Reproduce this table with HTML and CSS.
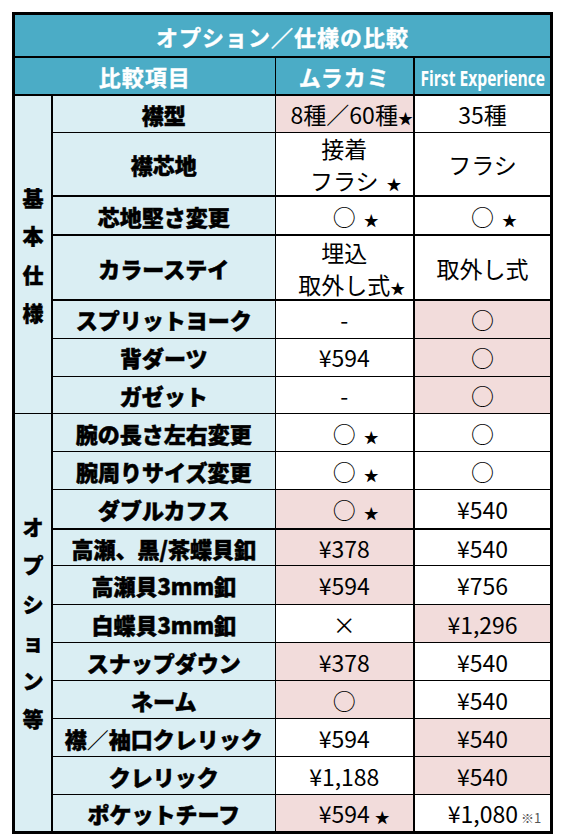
FILE: index.html
```html
<!DOCTYPE html>
<html lang="ja">
<head>
<meta charset="utf-8">
<title>オプション／仕様の比較</title>
<link rel="stylesheet" href="styles.css">
</head>
<body>
<div class="sheet">
<table class="cmp">
<colgroup><col class="c-grp"><col class="c-lbl"><col class="c-mk"><col class="c-fe"></colgroup>
<thead>
<tr class="r-title"><th colspan="4" class="title">オプション／仕様の比較</th></tr>
<tr class="r-head"><th colspan="2" class="head">比較項目</th><th class="head">ムラカミ</th><th class="head fe"><span class="narrow">First Experience</span></th></tr>
</thead>
<tbody>
<tr class="h37">
  <td rowspan="7" class="grp"><div class="vt"><span>基</span><span>本</span><span>仕</span><span>様</span></div></td>
  <th class="lbl">襟型</th><td class="pk">8種／60種<span class="star">★</span></td><td class="fe">35種</td></tr>
<tr class="h63 tb">
  <th class="lbl">襟芯地</th><td><div class="two">接着<br>フラシ<span class="star sp">★</span></div></td><td class="fe">フラシ</td></tr>
<tr class="h38 tb">
  <th class="lbl">芯地堅さ変更</th><td>○<span class="star sp">★</span></td><td class="fe">○<span class="star sp">★</span></td></tr>
<tr class="h64 tb">
  <th class="lbl">カラーステイ</th><td><div class="two">埋込<br>取外し式<span class="star">★</span></div></td><td class="fe">取外し式</td></tr>
<tr class="h375">
  <th class="lbl">スプリットヨーク</th><td>-</td><td class="fe pk">○</td></tr>
<tr class="h38">
  <th class="lbl">背ダーツ</th><td>¥594</td><td class="fe pk">○</td></tr>
<tr class="h375">
  <th class="lbl">ガゼット</th><td>-</td><td class="fe pk">○</td></tr>
<tr class="h38">
  <td rowspan="11" class="grp"><div class="vt"><span>オ</span><span>プ</span><span>シ</span><span>ョ</span><span>ン</span><span>等</span></div></td>
  <th class="lbl">腕の長さ左右変更</th><td>○<span class="star sp">★</span></td><td class="fe">○</td></tr>
<tr class="h38">
  <th class="lbl">腕周りサイズ変更</th><td>○<span class="star sp">★</span></td><td class="fe">○</td></tr>
<tr class="h39 tb">
  <th class="lbl">ダブルカフス</th><td class="pk">○<span class="star sp">★</span></td><td class="fe">¥540</td></tr>
<tr class="h36">
  <th class="lbl">高瀬、黒/茶蝶貝釦</th><td class="pk">¥378</td><td class="fe">¥540</td></tr>
<tr class="h39">
  <th class="lbl">高瀬貝3mm釦</th><td class="pk">¥594</td><td class="fe">¥756</td></tr>
<tr class="h38">
  <th class="lbl">白蝶貝3mm釦</th><td>×</td><td class="fe pk">¥1,296</td></tr>
<tr class="h38">
  <th class="lbl">スナップダウン</th><td class="pk">¥378</td><td class="fe">¥540</td></tr>
<tr class="h38">
  <th class="lbl">ネーム</th><td class="pk">○</td><td class="fe">¥540</td></tr>
<tr class="h38">
  <th class="lbl">襟<span class="thin">／</span>袖口クレリック</th><td>¥594</td><td class="fe pk">¥540</td></tr>
<tr class="h38">
  <th class="lbl">クレリック</th><td>¥1,188</td><td class="fe pk">¥540</td></tr>
<tr class="h365">
  <th class="lbl">ポケットチーフ</th><td class="pk">¥594<span class="star sm">★</span></td><td class="fe">¥1,080<span class="note">※1</span></td></tr>
</tbody>
</table>
</div>
</body>
</html>
```
FILE: styles.css
```css
body {
  margin: 0;
  background: #fff;
  font-family: "Noto Sans CJK JP", "Noto Sans", sans-serif;
  color: #000;
}

.sheet {
  margin: 12px;
  width: 535px;
  border: 3px solid #000;
}

.cmp {
  width: 535px;
  table-layout: fixed;
  border-collapse: collapse;
  border-style: hidden;
}

.c-grp { width: 37px; }
.c-lbl { width: 223px; }
.c-mk  { width: 139px; }
.c-fe  { width: 136px; }

.cmp th,
.cmp td {
  border: 1px solid #000;
  padding: 0;
  text-align: center;
  vertical-align: middle;
  white-space: nowrap;
  line-height: 24px;
}

.cmp td {
  font-size: 23px;
  font-weight: 400;
  background: #fff;
}

.title,
.head {
  background: #4bacc6;
  color: #fff;
  font-weight: 700;
  font-size: 22px;
  letter-spacing: 1px;
  -webkit-text-stroke: 0.4px #fff;
}

.r-title th { height: 41px; border-bottom: 2px solid #000; }
.r-head th { height: 36px; border-bottom: 2px solid #000; }

.narrow {
  display: inline-block;
  font-family: "Open Sans", "Roboto", sans-serif;
  font-weight: 700;
  font-size: 22px;
  letter-spacing: 0;
  -webkit-text-stroke: 0;
  transform: scaleX(0.71);
  transform-origin: center;
  margin: 0 -40px;
}

.cmp .fe { border-left: 2px solid #000; }

.cmp td.grp { border-right: 2px solid #000; background: #daeef3; }

.vt {
  width: 1em;
  margin: 0 auto;
  font-size: 21px;
  font-weight: 900;
  line-height: 38.5px;
  -webkit-text-stroke: 0.4px #000;
}

.vt span { display: block; }

.lbl {
  background: #daeef3;
  font-size: 22px;
  font-weight: 900;
  -webkit-text-stroke: 0.5px #000;
}

.thin { font-weight: 400; -webkit-text-stroke: 0; }

.cmp td.pk { background: #f2dcdb; }

.two {
  line-height: 32px;
  margin: -4px 0;
}

.star {
  font-size: 15px;
  line-height: 1;
  margin-right: -15px;
}
.star.sp {
  margin-left: 8px;
  margin-right: -23px;
}
.star.sm {
  margin-left: 5px;
  margin-right: -20px;
}

.note {
  font-size: 13px;
  line-height: 1;
  color: #555;
  margin-left: 3px;
  margin-right: -24px;
}

.tb > td,
.tb > th { border-bottom-width: 2px; }

.h36 > * { height: 35px; }
.h365 > * { height: 35.5px; }
.h37 > * { height: 36px; }
.h375 > * { height: 36.5px; }
.h38 > * { height: 37px; }
.h39 > * { height: 38px; }
.h63 > * { height: 62px; }
.h64 > * { height: 63px; }
```
